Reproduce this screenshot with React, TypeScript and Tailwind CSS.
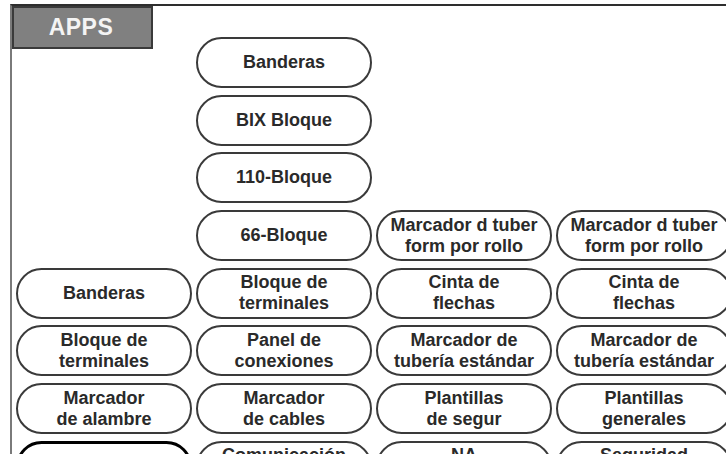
import React from 'react';

type Cell = { lines: string[]; selected?: boolean } | null;

const rows: Cell[][] = [
  [null, { lines: ['Banderas'] }, null, null],
  [null, { lines: ['BIX Bloque'] }, null, null],
  [null, { lines: ['110-Bloque'] }, null, null],
  [
    null,
    { lines: ['66-Bloque'] },
    { lines: ['Marcador d tuber', 'form por rollo'] },
    { lines: ['Marcador d tuber', 'form por rollo'] },
  ],
  [
    { lines: ['Banderas'] },
    { lines: ['Bloque de', 'terminales'] },
    { lines: ['Cinta de', 'flechas'] },
    { lines: ['Cinta de', 'flechas'] },
  ],
  [
    { lines: ['Bloque de', 'terminales'] },
    { lines: ['Panel de', 'conexiones'] },
    { lines: ['Marcador de', 'tubería estándar'] },
    { lines: ['Marcador de', 'tubería estándar'] },
  ],
  [
    { lines: ['Marcador', 'de alambre'] },
    { lines: ['Marcador', 'de cables'] },
    { lines: ['Plantillas', 'de segur'] },
    { lines: ['Plantillas', 'generales'] },
  ],
  [
    { lines: ['General'], selected: true },
    { lines: ['Comunicación', 'de datos'] },
    { lines: ['NA', 'Derecho'] },
    { lines: ['Seguridad', 'y etiquetas'] },
  ],
];

const AppButton = ({ cell }: { cell: Cell }) => {
  if (!cell) return <div />;
  return (
    <button
      className={`h-[51px] rounded-full bg-white flex flex-col items-center justify-center text-[18px] leading-[21px] font-bold text-[#2a2a2a] ${
        cell.selected ? 'border-[3px] border-black' : 'border-2 border-[#3a3a3a]'
      }`}
    >
      {cell.lines.map((line, i) => (
        <span key={i} className="whitespace-nowrap">
          {line}
        </span>
      ))}
    </button>
  );
};

const App = () => {
  return (
    <div
      className="w-[726px] h-[454px] overflow-hidden bg-white pl-[10px] pt-[4px]"
      style={{ fontFamily: '"Liberation Sans", Arial, sans-serif' }}
    >
      {/* Frame */}
      <div className="relative h-[600px] border-t-2 border-l-2 border-t-[#2e2e2e] border-l-[#7a7a7a]">
        {/* APPS tab */}
        <div className="absolute top-0 left-0 w-[141px] h-[43px] bg-[#808080] border-2 border-[#3a3a3a] flex items-center justify-center">
          <span className="text-[23px] font-bold text-[#f4f4f4] tracking-[0.5px] -ml-[3px]">APPS</span>
        </div>

        {/* Apps grid */}
        <div className="pt-[31px] pl-[4px] grid grid-cols-[176px_176px_176px_176px] gap-x-[4px] gap-y-[6.7px]">
          {rows.map((row, r) =>
            row.map((cell, c) => <AppButton key={`${r}-${c}`} cell={cell} />)
          )}
        </div>
      </div>
    </div>
  );
};

export default App;
